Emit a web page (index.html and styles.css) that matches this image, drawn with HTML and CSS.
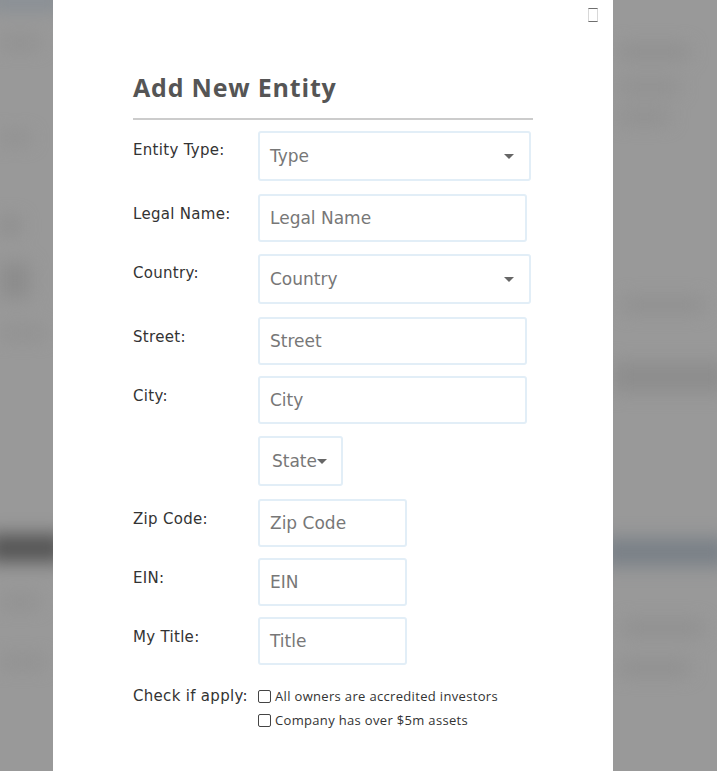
FILE: index.html
```html
<!DOCTYPE html>
<html>
<head>
<meta charset="utf-8">
<link rel="stylesheet" href="styles.css">
</head>
<body>
<div class="backdrop">
  <div class="bg-col bg-left">
    <div class="blob top"></div>
    <div class="blob l1"></div>
    <div class="blob l2"></div>
    <div class="blob l3"></div>
    <div class="blob l4"></div>
    <div class="blob l5"></div>
    <div class="blob dark"></div>
    <div class="blob l6"></div>
    <div class="blob l7"></div>
  </div>
  <div class="bg-gap"></div>
  <div class="bg-col bg-right">
    <div class="blob r1"></div>
    <div class="blob r2"></div>
    <div class="blob r3"></div>
    <div class="blob r4"></div>
    <div class="blob r5"></div>
    <div class="blob rdark"></div>
    <div class="blob r6"></div>
    <div class="blob r7"></div>
  </div>
</div>

<div class="modal">
  <div class="close-row"><span class="close-btn"></span></div>
  <h1 class="title">Add New Entity</h1>
  <div class="form">
    <div class="row">
      <label class="lbl">Entity Type:</label>
      <div class="field select wide">Type<span class="caret"></span></div>
    </div>
    <div class="row">
      <label class="lbl">Legal Name:</label>
      <div class="field input mid">Legal Name</div>
    </div>
    <div class="row">
      <label class="lbl">Country:</label>
      <div class="field select wide">Country<span class="caret"></span></div>
    </div>
    <div class="row">
      <label class="lbl">Street:</label>
      <div class="field input mid">Street</div>
    </div>
    <div class="row">
      <label class="lbl">City:</label>
      <div class="field input mid">City</div>
    </div>
    <div class="row">
      <label class="lbl"></label>
      <div class="field select state">State<span class="caret tight"></span></div>
    </div>
    <div class="row">
      <label class="lbl">Zip Code:</label>
      <div class="field input short">Zip Code</div>
    </div>
    <div class="row">
      <label class="lbl">EIN:</label>
      <div class="field input short">EIN</div>
    </div>
    <div class="row">
      <label class="lbl">My Title:</label>
      <div class="field input short">Title</div>
    </div>
    <div class="row check-row">
      <label class="lbl check-lbl">Check if apply:</label>
      <div class="checks">
        <div class="check"><span class="box"></span>All owners are accredited investors</div>
        <div class="check"><span class="box"></span>Company has over $5m assets</div>
      </div>
    </div>
  </div>
</div>
</body>
</html>
```
FILE: styles.css
```css
html, body {
  margin: 0;
  padding: 0;
}
body {
  width: 717px;
  height: 771px;
  overflow: hidden;
  background: #999999;
  font-family: "Open Sans", "Liberation Sans", sans-serif;
  position: relative;
}
.backdrop {
  display: flex;
  height: 771px;
}
.bg-col {
  display: flex;
  flex-direction: column;
  filter: blur(9px);
}
.bg-left { width: 53px; }
.bg-gap { width: 560px; }
.bg-right { flex: 1; }
.blob { background: #8f8f8f; }
.top { height: 18px; background: #878e95; margin: -8px -12px 0; }
.l1 { height: 10px; width: 40px; margin-top: 28px; }
.l2 { height: 10px; width: 30px; margin-top: 85px; }
.l3 { height: 15px; width: 20px; margin-top: 75px; background: #8c8c8c; }
.l4 { height: 35px; width: 30px; margin-top: 30px; background: #8c8c8c; }
.l5 { height: 10px; width: 45px; margin-top: 30px; }
.dark { height: 28px; margin: 196px -12px 0; background: #555; }
.l6 { height: 10px; width: 40px; margin-top: 35px; }
.l7 { height: 10px; width: 45px; margin-top: 50px; }
.r1 { height: 14px; width: 70px; margin: 45px 0 0 6px; }
.r2 { height: 12px; width: 60px; margin: 22px 0 0 6px; }
.r3 { height: 12px; width: 50px; margin: 18px 0 0 6px; }
.r4 { height: 14px; width: 80px; margin: 175px 0 0 10px; }
.r5 { height: 30px; margin: 50px -12px 0 0; background: #8d8d8d; }
.rdark { height: 28px; margin: 146px -12px 0; background: #798087; }
.r6 { height: 14px; width: 80px; margin: 55px 0 0 10px; }
.r7 { height: 14px; width: 70px; margin: 26px 0 0 6px; }

.modal {
  position: absolute;
  left: 53px;
  top: 0;
  width: 560px;
  height: 771px;
  background: #fff;
  box-sizing: border-box;
  padding: 0 80px;
}
.close-row {
  display: flex;
  justify-content: flex-end;
  margin-right: -65px;
  padding-top: 8px;
  height: 14px;
}
.close-btn {
  display: block;
  width: 8px;
  height: 12px;
  border: 1px solid #d8d8d8;
  border-top-color: #6e6e6e;
  border-bottom-color: #6e6e6e;
}
.title {
  margin: 48px 0 0 0;
  font-size: 25px;
  line-height: 34px;
  font-weight: 700;
  color: #555;
  letter-spacing: 0.8px;
  padding-bottom: 14px;
  border-bottom: 2px solid #ccc;
}
.form {
  display: flex;
  flex-direction: column;
  gap: 11px;
  padding-top: 10px;
}
.row {
  display: flex;
  align-items: flex-start;
}
.lbl {
  width: 125px;
  flex: none;
  font-family: "DejaVu Sans", "Open Sans", sans-serif;
  font-size: 15px;
  line-height: 20px;
  color: #333;
  padding-top: 10px;
  letter-spacing: 0.3px;
}
.field {
  box-sizing: border-box;
  border: 2px solid #e2eef7;
  border-radius: 3px;
  font-family: "DejaVu Sans", "Open Sans", sans-serif;
  font-size: 17px;
  color: #777;
  padding-left: 10px;
  display: flex;
  align-items: center;
}
.input { height: 48px; }
.select { height: 50px; margin: 1px 0 2px; }
.wide { width: 273px; }
.mid { width: 269px; }
.short { width: 149px; }
.state { width: 85px; padding-left: 12px; }
.caret {
  margin-left: auto;
  margin-right: 15px;
  width: 0;
  height: 0;
  border-left: 5px solid transparent;
  border-right: 5px solid transparent;
  border-top: 5px solid #666;
}
.caret.tight { margin-left: 0; margin-right: 0; }
.check-row { margin-top: 12px; }
.check-lbl { padding-top: 0; line-height: 16px; }
.checks {
  display: flex;
  flex-direction: column;
  gap: 8px;
}
.check {
  display: flex;
  align-items: center;
  font-size: 13px;
  line-height: 16px;
  color: #333;
  letter-spacing: 0.33px;
}
.box {
  width: 11px;
  height: 11px;
  border: 1px solid #444;
  border-radius: 2px;
  margin: 0 4px 0 0;
  background: #fff;
}
```
